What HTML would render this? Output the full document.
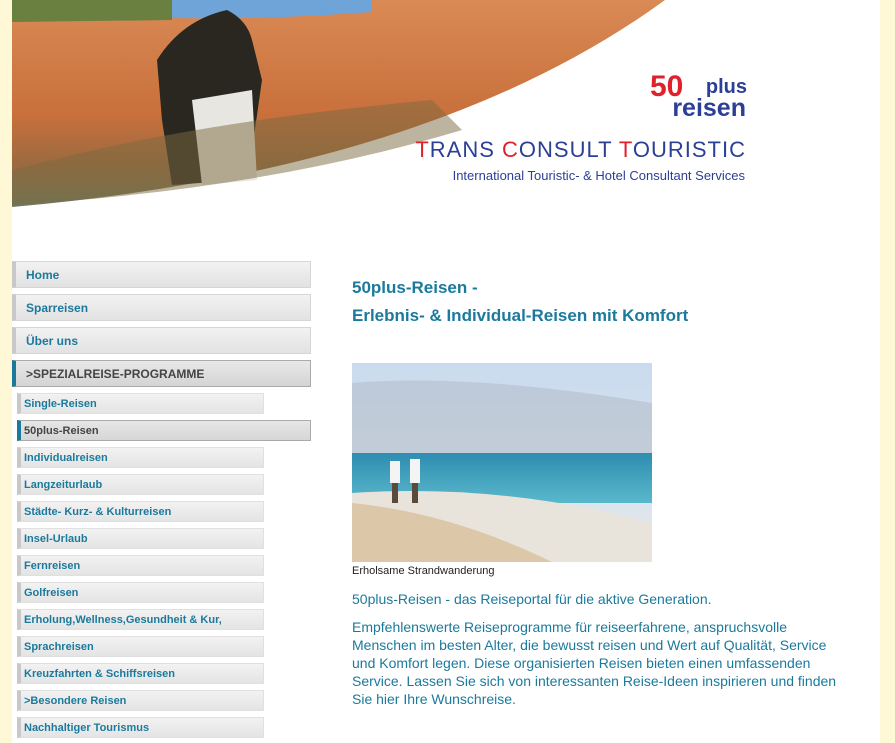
<!DOCTYPE html>
<html><head><meta charset="utf-8"><style>
*{margin:0;padding:0;box-sizing:border-box}
body{width:895px;height:743px;background:#fff8d6;font-family:"Liberation Sans",Arial,sans-serif;position:relative;overflow:hidden}
#page{position:absolute;left:12px;top:0;width:868px;height:743px;background:#fff}
.m{position:absolute;left:0;width:299px;height:27px;background:linear-gradient(#f2f2f2,#e2e2e2);border:1px solid #d6d6d6;border-left:4px solid #c8c8c8;color:#1b7a9c;font-weight:bold;font-size:12px;padding:6px 0 0 10px}
.m.act{border-color:#aaa;border-left-color:#1b7a9c;color:#444;background:linear-gradient(#e8e8e8,#d4d4d4)}
.s{position:absolute;left:5px;width:247px;height:21px;background:linear-gradient(#f2f2f2,#e4e4e4);border:1px solid #e0e0e0;border-left:4px solid #c8c8c8;color:#1b7a9c;font-weight:bold;font-size:11px;padding:4px 0 0 3px}
.s.act{width:294px;border-color:#aaa;border-left-color:#1b7a9c;color:#444;background:linear-gradient(#e6e6e6,#d6d6d6)}
h1{position:absolute;left:340px;top:274px;font-size:17px;line-height:28px;color:#1b7a9c;font-weight:bold}
.t{position:absolute;left:340px;color:#1b7a9c;font-size:14px;line-height:18px;width:490px}
</style></head><body><div id="page">
<svg width="868" height="210" style="position:absolute;left:0;top:0">
<defs><linearGradient id="g" x1="0" y1="0" x2="0" y2="1"><stop offset="0" stop-color="#d98a55"/><stop offset=".55" stop-color="#c9703c"/><stop offset=".8" stop-color="#9a6a40"/><stop offset="1" stop-color="#6b7a60"/></linearGradient></defs>
<path d="M0,0 L653,0 Q420,170 0,207 Z" fill="url(#g)"/>
<path d="M160,0 L360,0 L360,12 Q250,20 160,18 Z" fill="#6fa4d8"/>
<path d="M0,0 L160,0 L160,20 L0,22 Z" fill="#6a8040"/>
<path d="M145,60 Q170,20 215,10 Q235,20 240,40 L250,80 L240,150 L230,180 L160,185 L150,120 Z" fill="#2a2620"/>
<path d="M180,100 L240,90 L245,180 L190,185 Z" fill="#e8e6e0"/>
<path d="M40,160 Q200,120 420,100 L450,130 Q250,190 0,205 L0,170 Z" fill="#7b6a40" opacity=".5"/>
<text x="638" y="96" font-family="Liberation Sans" font-size="30" font-weight="bold" fill="#e0202a">50</text>
<text x="735" y="93" font-family="Liberation Sans" font-size="20" font-weight="bold" fill="#2b3f96" text-anchor="end">plus</text>
<text x="734" y="116" font-family="Liberation Sans" font-size="25" font-weight="bold" fill="#2b3f96" text-anchor="end">reisen</text>
<text x="734" y="157" font-family="Liberation Sans" font-size="22" fill="#2b3f96" text-anchor="end" letter-spacing="1"><tspan fill="#e0202a">T</tspan>RANS <tspan fill="#e0202a">C</tspan>ONSULT <tspan fill="#e0202a">T</tspan>OURISTIC</text>
<text x="733" y="180" font-family="Liberation Sans" font-size="13" fill="#2b3f96" text-anchor="end">International Touristic-  &amp; Hotel Consultant Services</text>
</svg>
<div class="m" style="top:261px">Home</div>
<div class="m" style="top:294px">Sparreisen</div>
<div class="m" style="top:327px">Über uns</div>
<div class="m act" style="top:360px">&gt;SPEZIALREISE-PROGRAMME</div>
<div class="s" style="top:393px">Single-Reisen</div>
<div class="s act" style="top:420px">50plus-Reisen</div>
<div class="s" style="top:447px">Individualreisen</div>
<div class="s" style="top:474px">Langzeiturlaub</div>
<div class="s" style="top:501px">Städte- Kurz- &amp; Kulturreisen</div>
<div class="s" style="top:528px">Insel-Urlaub</div>
<div class="s" style="top:555px">Fernreisen</div>
<div class="s" style="top:582px">Golfreisen</div>
<div class="s" style="top:609px">Erholung,Wellness,Gesundheit &amp; Kur,</div>
<div class="s" style="top:636px">Sprachreisen</div>
<div class="s" style="top:663px">Kreuzfahrten &amp; Schiffsreisen</div>
<div class="s" style="top:690px">&gt;Besondere Reisen</div>
<div class="s" style="top:717px">Nachhaltiger Tourismus</div>
<h1>50plus-Reisen -<br>Erlebnis- &amp; Individual-Reisen mit Komfort</h1>
<svg width="300" height="199" style="position:absolute;left:340px;top:363px">
<defs><linearGradient id="sk" x1="0" y1="0" x2="0" y2="1"><stop offset="0" stop-color="#c9dbee"/><stop offset="1" stop-color="#e4e8ec"/></linearGradient>
<linearGradient id="se" x1="0" y1="0" x2="0" y2="1"><stop offset="0" stop-color="#2e8db0"/><stop offset="1" stop-color="#5ab8cc"/></linearGradient></defs>
<rect width="300" height="199" fill="url(#sk)"/>
<path d="M0,20 Q120,10 300,40 L300,90 L0,90Z" fill="#b0b8c4" opacity=".5"/>
<rect y="90" width="300" height="50" fill="url(#se)"/>
<path d="M0,130 Q150,120 300,160 L300,199 L0,199Z" fill="#e8e4dc"/>
<path d="M0,140 Q100,150 200,199 L0,199Z" fill="#dcc8a8"/>
<rect x="38" y="98" width="10" height="22" fill="#f4f4f4"/><rect x="58" y="96" width="10" height="24" fill="#f4f4f4"/>
<rect x="40" y="120" width="6" height="20" fill="#5a4a3a"/><rect x="60" y="120" width="6" height="20" fill="#5a4a3a"/>
</svg>
<div style="position:absolute;left:340px;top:565px;font-size:11px;color:#222">Erholsame Strandwanderung</div>
<div class="t" style="top:590px">50plus-Reisen - das Reiseportal für die aktive Generation.</div>
<div class="t" style="top:618px">Empfehlenswerte Reiseprogramme für reiseerfahrene, anspruchsvolle Menschen im besten Alter, die bewusst reisen und Wert auf Qualität, Service und Komfort legen. Diese organisierten Reisen bieten einen umfassenden Service. Lassen Sie sich von interessanten Reise-Ideen inspirieren und finden Sie hier Ihre Wunschreise.</div>
</div></body></html>
